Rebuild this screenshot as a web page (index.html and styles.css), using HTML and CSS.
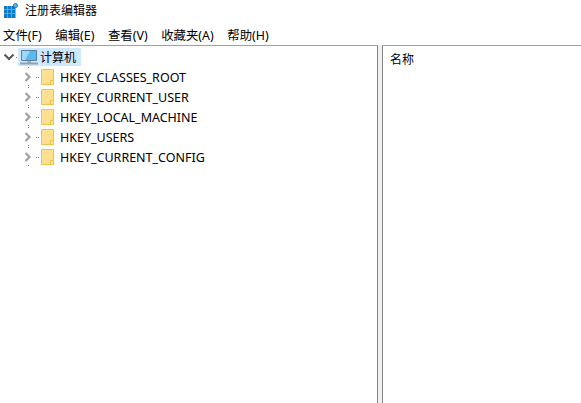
FILE: index.html
```html
<!DOCTYPE html>
<html lang="zh-CN">
<head>
  <meta charset="UTF-8">
  <title>注册表编辑器</title>
  <link rel="stylesheet" href="styles.css">
</head>
<body>
  <svg width="0" height="0" class="defs">
    <defs>
      <symbol id="folder" viewBox="0 0 13 16">
        <path d="M.5.5h12v15H.5z" fill="#ffe08f" stroke="#eec24f"/>
        <path d="M9.500 15.500v-4h3v4z" fill="#ffe9ae" stroke="#eec24f"/>
      </symbol>
      <symbol id="closed" viewBox="0 0 40 20">
        <path d="M25.500 6l4 4-4 4" fill="none" stroke="#a0a0a0" stroke-width="2.200"/>
        <path d="M36 10.500h1M38 10.500h1M28.500 0v1M28.500 18v1" stroke="#777" fill="none"/>
      </symbol>
    </defs>
  </svg>

  <div class="title-bar">
    <svg class="app-icon" width="15" height="15" viewBox="0 0 15 15">
      <path d="M1 3h11.500v12H1z" fill="#0b7cc8"/>
      <path d="M4.500 3v12M8.500 3v12M1 6.500h11.500M1 10.500h11.500" stroke="#5db4e6" stroke-width=".8"/>
      <circle cx="12.500" cy="2.500" r="2" fill="#5dbdee" stroke="#1b78b8"/>
    </svg>
    <span>注册表编辑器</span>
  </div>

  <div class="menu-bar">
    <span>文件(F)</span>
    <span>编辑(E)</span>
    <span>查看(V)</span>
    <span>收藏夹(A)</span>
    <span>帮助(H)</span>
  </div>

  <div class="panes">
    <div class="tree">
      <div class="tree-row">
        <svg class="toggle" width="18" height="20" viewBox="0 0 18 20">
          <path d="M4.500 7.500l4.500 4.500 4.500-4.500" fill="none" stroke="#555" stroke-width="2"/>
          <path d="M16 10.500h1" stroke="#777"/>
        </svg>
        <div class="selected">
          <svg width="19" height="15" viewBox="0 0 19 15">
            <path d="M2.500.5h15v10h-15z" fill="#5cb8ee" stroke="#5b7f99"/>
            <path d="M3 1h8l-5 9H3z" fill="#9ddaf8"/>
            <path d="M8 11h4v2H8z" fill="#9fb2bf"/>
            <path d="M1 13.500h18" stroke="#8ea2b0" stroke-width="2"/>
          </svg>
          <span>计算机</span>
        </div>
      </div>
      <div class="tree-row">
        <svg class="toggle-key" width="40" height="20"><use href="#closed"/></svg>
        <svg class="folder" width="13" height="16"><use href="#folder"/></svg>
        <span class="key">HKEY_CLASSES_ROOT</span>
      </div>
      <div class="tree-row">
        <svg class="toggle-key" width="40" height="20"><use href="#closed"/></svg>
        <svg class="folder" width="13" height="16"><use href="#folder"/></svg>
        <span class="key">HKEY_CURRENT_USER</span>
      </div>
      <div class="tree-row">
        <svg class="toggle-key" width="40" height="20"><use href="#closed"/></svg>
        <svg class="folder" width="13" height="16"><use href="#folder"/></svg>
        <span class="key">HKEY_LOCAL_MACHINE</span>
      </div>
      <div class="tree-row">
        <svg class="toggle-key" width="40" height="20"><use href="#closed"/></svg>
        <svg class="folder" width="13" height="16"><use href="#folder"/></svg>
        <span class="key">HKEY_USERS</span>
      </div>
      <div class="tree-row">
        <svg class="toggle-key" width="40" height="20"><use href="#closed"/></svg>
        <svg class="folder" width="13" height="16"><use href="#folder"/></svg>
        <span class="key">HKEY_CURRENT_CONFIG</span>
      </div>
    </div>
    <div class="splitter"></div>
    <div class="list">
      <div class="list-head">名称</div>
    </div>
  </div>
</body>
</html>
```

FILE: styles.css
```css
html, body {
  height: 100%;
}

body {
  margin: 0;
  background-color: #fff;
  color: #000;
  font-family: "Noto Sans", "Noto Sans CJK SC", sans-serif;
  font-size: 12px;
  display: flex;
  flex-direction: column;
  overflow: hidden;
}

.defs {
  position: absolute;
}

.title-bar {
  height: 20px;
  flex: none;
  display: flex;
  align-items: center;
  padding-left: 3px;
  gap: 7px;
}

.menu-bar {
  height: 21px;
  padding: 4px 0 0 3px;
  flex: none;
  display: flex;
  align-items: center;
  gap: 13.6px;
  font-size: 12.4px;
}

.panes {
  flex: 1;
  display: flex;
  min-height: 0;
}

.tree {
  width: 377px;
  flex: none;
  padding-top: 1px;
  border-top: 1px solid #a0a0a0;
  border-right: 1px solid #838383;
}

.tree-row {
  height: 20px;
  display: flex;
  align-items: center;
}

.selected {
  height: 18px;
  width: 63px;
  display: flex;
  align-items: center;
  gap: 2px;
  background-color: #cde8ff;
}

.selected svg {
  margin-left: 1px;
}

.toggle-key {
  flex: none;
}

.folder {
  margin-left: 1px;
  flex: none;
}

.key {
  margin-left: 6px;
  font-size: 12.5px;
}

.splitter {
  width: 4px;
  flex: none;
  background-color: #f0f0f0;
}

.list {
  flex: 1;
  border-top: 1px solid #a0a0a0;
  border-left: 1px solid #838383;
}

.list-head {
  padding: 4px 0 0 7px;
}
```
